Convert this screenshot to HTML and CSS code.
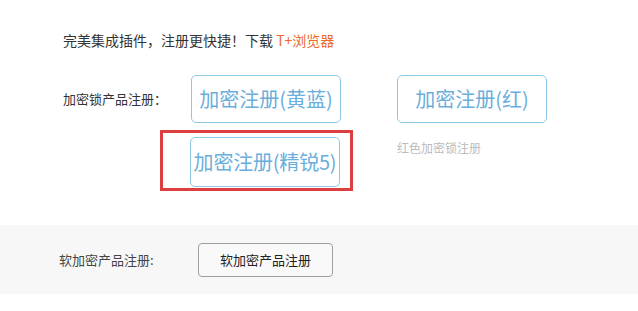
FILE: index.html
```html
<!DOCTYPE html>
<html lang="zh-CN">
<head>
<meta charset="utf-8">
<title>注册</title>
<link rel="stylesheet" href="styles.css">
</head>
<body>
<div class="page">
  <p class="intro">完美集成插件，注册更快捷！下载 <a class="dl" href="#">T+浏览器</a></p>
  <div class="row1">
    <span class="label">加密锁产品注册：</span>
    <button class="key-btn">加密注册(黄蓝)</button>
    <button class="key-btn red-btn">加密注册(红)</button>
  </div>
  <div class="row2">
    <div class="highlight">
      <button class="key-btn">加密注册(精锐5)</button>
    </div>
    <span class="tip">红色加密锁注册</span>
  </div>
  <div class="soft">
    <span class="soft-label">软加密产品注册:</span>
    <button class="soft-btn">软加密产品注册</button>
  </div>
</div>
</body>
</html>
```

FILE: styles.css
```css
html, body {
  margin: 0;
  padding: 0;
  background: #ffffff;
}
body {
  font-family: "Noto Sans CJK SC", "Noto Sans", "Liberation Sans", sans-serif;
  color: #333333;
}
.page {
  padding-top: 30px;
}
.intro {
  margin: 0 0 0 63px;
  font-size: 14px;
  line-height: 20px;
  color: #333333;
}
.dl {
  color: #ec6a2c;
  text-decoration: none;
}
.row1 {
  display: flex;
  align-items: center;
  margin-top: 25px;
  padding-left: 63px;
  height: 48px;
}
.label {
  width: 128px;
  font-size: 13px;
  line-height: 20px;
  flex: none;
}
.key-btn {
  box-sizing: border-box;
  width: 150px;
  height: 48px;
  padding: 0;
  border: 1px solid #8fc8e6;
  border-radius: 5px;
  background: #ffffff;
  color: #6aaedc;
  font-family: "Noto Sans CJK SC", "Noto Sans", sans-serif;
  font-size: 20px;
  line-height: 24px;
  white-space: nowrap;
  flex: none;
}
.red-btn {
  margin-left: 56px;
}
.row2 {
  display: flex;
  align-items: flex-start;
  margin-top: 7px;
  padding-left: 160px;
}
.highlight {
  box-sizing: border-box;
  width: 193px;
  height: 61px;
  border: 3px solid #dd3e3e;
  padding: 4px 0 0 27px;
  flex: none;
}
.highlight .key-btn {
  height: 50px;
  letter-spacing: -0.2px;
}
.tip {
  margin-left: 44px;
  margin-top: 10px;
  font-size: 12px;
  line-height: 16px;
  color: #bbbbbb;
}
.soft {
  display: flex;
  align-items: center;
  margin-top: 34px;
  height: 69px;
  padding-left: 59px;
  background: #f7f7f7;
}
.soft-label {
  width: 139px;
  font-size: 13px;
  line-height: 20px;
  color: #444444;
  flex: none;
}
.soft-btn {
  box-sizing: border-box;
  width: 135px;
  height: 34px;
  padding: 0;
  border: 1px solid #a0a0a0;
  border-radius: 4px;
  background: #f9f9f9;
  color: #222222;
  font-family: "Noto Sans CJK SC", "Noto Sans", sans-serif;
  font-size: 13px;
  line-height: 20px;
}
```
